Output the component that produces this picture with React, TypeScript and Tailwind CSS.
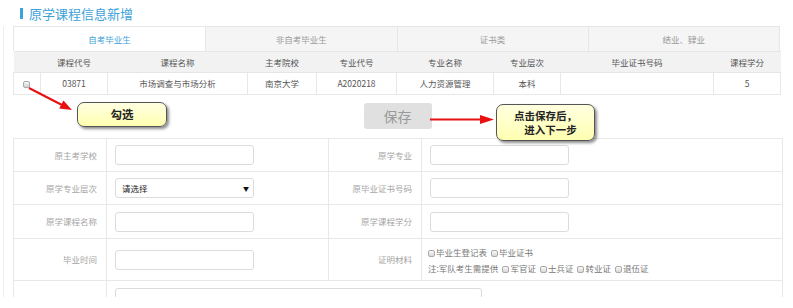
import React from "react";

function Box() {
  return (
    <span className="inline-block w-[7px] h-[7px] border border-[#aaa] rounded-[2px] bg-gradient-to-b from-[#fafafa] to-[#d8d8d8] align-[-1px] mr-[1px] ml-[4px]" />
  );
}

function Input({ w = "w-[139px]" }: { w?: string }) {
  return <div className={`${w} h-[20px] border border-[#dcdcdc] rounded-[3px] bg-white`} />;
}

export default function App() {
  const cols = [27, 67, 140, 69, 80, 97, 67, 153, 67];
  const heads = ["", "课程代号", "课程名称", "主考院校", "专业代号", "专业名称", "专业层次", "毕业证书号码", "课程学分"];
  const data = ["", "03871", "市场调查与市场分析", "南京大学", "A2020218", "人力资源管理", "本科", "", "5"];
  const tabs = ["自考毕业生", "非自考毕业生", "证书类", "结业、肄业"];
  const labelCls = "text-right pr-[9px] text-[8.5px] text-[#a5a5a5] border border-[#e8e8e8]";
  const cellCls = "pl-[8px] border border-[#e8e8e8]";

  return (
    <div className="relative w-[793px] h-[308px] overflow-hidden bg-white font-['Noto_Sans_CJK_SC','Noto_Sans',sans-serif]">
      {/* Title */}
      <div className="h-[26px] flex items-center pl-[20px] gap-[6px] pt-[1px]">
        <div className="w-[3px] h-[11px] bg-[#3ea2d9]" />
        <div className="text-[13px] leading-none text-[#3ea2d9]">原学课程信息新增</div>
      </div>

      <div className="ml-[3px] border-l border-[#eeeeee] pl-[9px] h-[271px] overflow-hidden">
        {/* Tabs */}
        <div className="w-[767px] h-[25px] grid grid-cols-4 border border-b-0 border-[#e6e6e6]">
          {tabs.map((t, i) => (
            <div
              key={t}
              className={`flex items-center justify-center text-[8.5px] ${
                i === 0 ? "bg-white text-[#3ea2d9]" : "bg-[#f5f5f5] text-[#9a9a9a] border-l border-[#e6e6e6]"
              }`}
            >
              {t}
            </div>
          ))}
        </div>

        {/* Course table */}
        <table className="w-[767px] table-fixed border-collapse">
          <colgroup>
            {cols.map((c, i) => (
              <col key={i} style={{ width: c }} />
            ))}
          </colgroup>
          <tbody>
            <tr className="h-[21px] bg-[#f2f2f2]">
              {heads.map((h, i) => (
                <td key={i} className="text-center text-[8.5px] text-[#555] border-y border-[#e6e6e6] p-0">
                  {h}
                </td>
              ))}
            </tr>
            <tr className="h-[22px] bg-white">
              {data.map((d, i) => (
                <td
                  key={i}
                  className="text-center text-[8.5px] text-[#555] border border-[#e8e8e8] p-0"
                >
                  {i === 0 ? (
                    <span className="inline-block w-[7px] h-[7px] border border-[#aaa] rounded-[2px] bg-gradient-to-b from-[#fafafa] to-[#d0d0d0] -ml-[2px] align-middle" />
                  ) : (
                    d
                  )}
                </td>
              ))}
            </tr>
          </tbody>
        </table>

        {/* Save */}
        <div className="w-[769px] flex justify-center pt-[8px] pb-[9px]">
          <div className="w-[68px] h-[26px] rounded-[3px] bg-[#e0e0e0] flex items-center justify-center text-[14px] text-[#999]">
            保存
          </div>
        </div>

        {/* Form table */}
        <table className="w-[769px] table-fixed border-collapse">
          <colgroup>
            <col style={{ width: 93 }} />
            <col style={{ width: 222 }} />
            <col style={{ width: 93 }} />
            <col style={{ width: 361 }} />
          </colgroup>
          <tbody>
            <tr className="h-[33px]">
              <td className={labelCls}>原主考学校</td>
              <td className={cellCls}><Input /></td>
              <td className={labelCls}>原学专业</td>
              <td className={cellCls}><Input /></td>
            </tr>
            <tr className="h-[33px]">
              <td className={labelCls}>原学专业层次</td>
              <td className={cellCls}>
                <div className="w-[139px] h-[20px] border border-[#dcdcdc] rounded-[3px] bg-white flex items-center justify-between pl-[6px] pr-[4px]">
                  <span className="text-[8.5px] text-[#222]">请选择</span>
                  <span className="text-[6px] text-[#111]">▼</span>
                </div>
              </td>
              <td className={labelCls}>原毕业证书号码</td>
              <td className={cellCls}><Input /></td>
            </tr>
            <tr className="h-[34px]">
              <td className={labelCls}>原学课程名称</td>
              <td className={cellCls}><Input /></td>
              <td className={labelCls}>原学课程学分</td>
              <td className={cellCls}><Input /></td>
            </tr>
            <tr className="h-[42px]">
              <td className={labelCls}>毕业时间</td>
              <td className={cellCls}><Input /></td>
              <td className={labelCls}>证明材料</td>
              <td className="pl-[2px] border border-[#e8e8e8] text-[8.5px] leading-[16px] text-[#777]">
                <div>
                  <Box />毕业生登记表<Box />毕业证书
                </div>
                <div className="pl-[4px]">
                  注:军队考生需提供<Box />军官证<Box />士兵证<Box />转业证<Box />退伍证
                </div>
              </td>
            </tr>
            <tr className="h-[40px] align-top">
              <td className={labelCls}></td>
              <td colSpan={3} className="pl-[8px] pt-[7px] border border-[#e8e8e8]">
                <Input w="w-[367px]" />
              </td>
            </tr>
          </tbody>
        </table>
      </div>

      {/* Arrows overlay */}
      <svg className="absolute left-0 top-0 pointer-events-none" width="793" height="308">
        <line x1="29" y1="88" x2="62" y2="105" stroke="#e81010" strokeWidth="2" />
        <polygon points="72,110 63.4,100.5 59.2,108.5" fill="#e81010" />
        <line x1="430" y1="119.5" x2="482" y2="119.5" stroke="#e81010" strokeWidth="2" />
        <polygon points="494,119.5 480,115 480,124" fill="#e81010" />
      </svg>

      {/* Callouts */}
      <div className="absolute left-[77px] top-[102px] w-[90px] h-[25px] rounded-[7px] border border-[#555] bg-gradient-to-b from-[#ffffe0] to-[#ffffb0] shadow-[2px_2px_3px_rgba(0,0,0,0.45)] flex items-center justify-center text-[11.5px] font-bold text-[#222]">
        勾选
      </div>
      <div className="absolute left-[496px] top-[104px] w-[99px] h-[37px] rounded-[7px] border border-[#555] bg-gradient-to-b from-[#ffffe0] to-[#ffffb0] shadow-[2px_2px_3px_rgba(0,0,0,0.45)] flex flex-col items-center justify-center text-[10.5px] leading-[14px] font-bold text-[#222]">
        <div>点击保存后，</div>
        <div className="pl-[10px]">进入下一步</div>
      </div>
    </div>
  );
}
